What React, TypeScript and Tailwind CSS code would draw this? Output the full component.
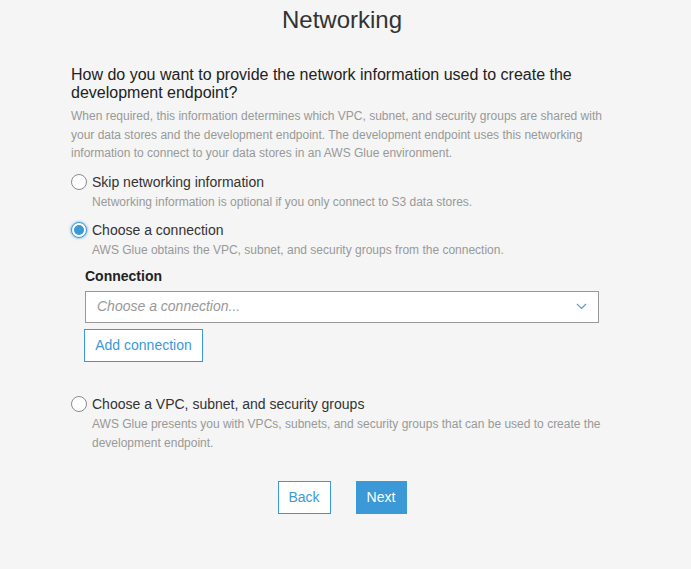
import React from 'react';

type Option = {
  id: string;
  label: string;
  help: string;
};

const options: Option[] = [
  {
    id: 'skip',
    label: 'Skip networking information',
    help: 'Networking information is optional if you only connect to S3 data stores.',
  },
  {
    id: 'connection',
    label: 'Choose a connection',
    help: 'AWS Glue obtains the VPC, subnet, and security groups from the connection.',
  },
  {
    id: 'vpc',
    label: 'Choose a VPC, subnet, and security groups',
    help: 'AWS Glue presents you with VPCs, subnets, and security groups that can be used to create the development endpoint.',
  },
];

const Radio: React.FC<{ checked: boolean }> = ({ checked }) =>
  checked ? (
    <span className="flex h-4 w-4 shrink-0 items-center justify-center rounded-full border border-[#3b99d8] bg-white shadow-[0_0_2px_1px_rgba(59,153,216,0.45)]">
      <span className="h-2.5 w-2.5 rounded-full bg-[#3b99d8]" />
    </span>
  ) : (
    <span className="h-4 w-4 shrink-0 rounded-full border border-[#8c8c8c] bg-white" />
  );

const RadioRow: React.FC<{ option: Option; checked: boolean; className?: string }> = ({
  option,
  checked,
  className,
}) => (
  <div className={className}>
    <div className="flex h-5 items-center gap-[5px]">
      <Radio checked={checked} />
      <span className="text-[14px] leading-5 text-[#333]">{option.label}</span>
    </div>
    <p className="ml-[21px] mt-px max-w-[520px] text-[12px] leading-[19px] text-[#999]">
      {option.help}
    </p>
  </div>
);

export default function App() {
  const selected = 'connection';

  return (
    <div className="min-h-[569px] w-full bg-[#f4f5f4] font-['Liberation_Sans',Arial,sans-serif]">
      <div className="ml-[71px] w-[542px]">
        <h1 className="pt-[5px] text-center text-[24px] leading-[30px] text-[#333]">Networking</h1>

        <h2 className="mt-[31px] max-w-[540px] text-[16px] leading-[18px] text-[#222]">
          How do you want to provide the network information used to create the development
          endpoint?
        </h2>
        <p className="mt-[5px] max-w-[540px] text-[12px] leading-[18.5px] text-[#999]">
          When required, this information determines which VPC, subnet, and security groups are
          shared with your data stores and the development endpoint. The development endpoint uses
          this networking information to connect to your data stores in an AWS Glue environment.
        </p>

        <RadioRow option={options[0]} checked={selected === 'skip'} className="mt-[9px]" />
        <RadioRow option={options[1]} checked={selected === 'connection'} className="mt-[8px]" />

        {/* CONNECTION PICKER */}
        <div className="ml-[14px] mt-[6px]">
          <label className="block text-[14px] font-bold leading-5 text-[#222]">Connection</label>
          <div className="mt-[5px] flex h-8 w-[514px] items-center justify-between border border-[#999] bg-white pl-[11px] pr-[11px]">
            <span className="text-[14px] italic text-[#999]">Choose a connection...</span>
            <svg width="11" height="7" viewBox="0 0 11 7" fill="none">
              <path d="M1 1l4.5 4.5L10 1" stroke="#5b9bd1" strokeWidth="1.2" />
            </svg>
          </div>
          <button className="-ml-px mt-[6px] h-[33px] w-[119px] border border-[#3b99d8] bg-white text-[14px] text-[#3b99d8]">
            Add connection
          </button>
        </div>

        <RadioRow option={options[2]} checked={selected === 'vpc'} className="mt-[32px]" />

        <div className="mt-[28px] flex justify-center gap-[25px]">
          <button className="h-[33px] w-[53px] border border-[#3b99d8] bg-white text-[14px] text-[#3b99d8]">
            Back
          </button>
          <button className="h-[33px] w-[51px] bg-[#3b99d8] text-[14px] text-white">Next</button>
        </div>
      </div>
    </div>
  );
}
